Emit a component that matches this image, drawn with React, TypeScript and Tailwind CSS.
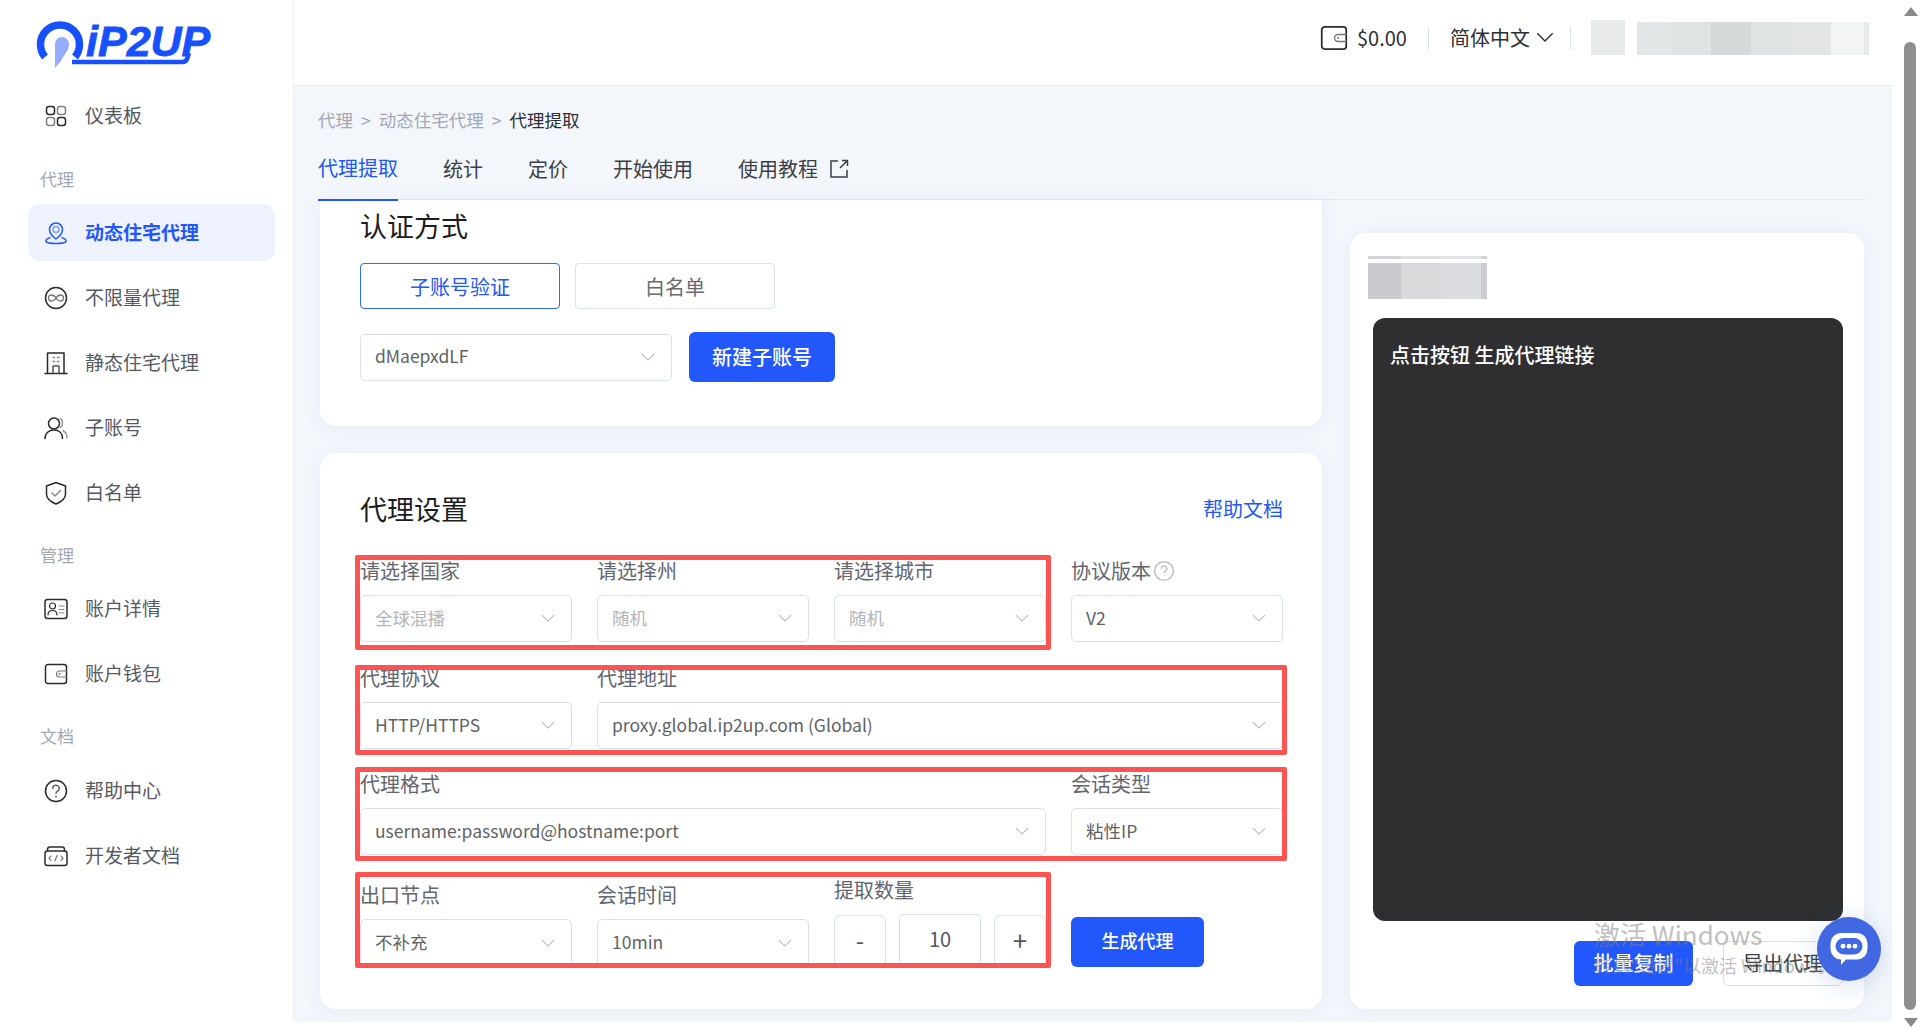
import type { ReactNode } from 'react'

const ink = { fill: 'none', stroke: '#2b2b2b', strokeWidth: 1.5, strokeLinecap: 'round', strokeLinejoin: 'round' } as const

function Logo() {
  return (
    <svg width="186" height="56" viewBox="0 0 186 56" className="block">
      <path d="M9 41 A19.5 19.5 0 1 1 39 41" fill="none" stroke="#1650ff" strokeWidth="7.5" />
      <path d="M36 46 H146 Q150 46 151 43 L153 37" fill="none" stroke="#1650ff" strokeWidth="4.5" />
      <path d="M19 52 V28 A7 7 0 0 1 33 28 C33 36 27 39 25 45 Z" fill="#94adff" />
      <text x="50" y="40" fontFamily="'Liberation Sans', sans-serif" fontSize="43" fontWeight="700" fontStyle="italic" fill="#1650ff" stroke="#1650ff" strokeWidth="0.8">iP2UP</text>
    </svg>
  )
}

function GridIcon() {
  return (
    <svg width="24" height="24" viewBox="0 0 24 24">
      <rect x="2.5" y="2.5" width="8" height="8" rx="2.5" {...ink} />
      <rect x="13.5" y="2.5" width="8" height="8" rx="2.5" {...ink} stroke="#808080" />
      <rect x="2.5" y="13.5" width="8" height="8" rx="2.5" {...ink} stroke="#808080" />
      <rect x="13.5" y="13.5" width="8" height="8" rx="2.5" {...ink} />
    </svg>
  )
}

function PinIcon() {
  return (
    <svg width="24" height="24" viewBox="0 0 24 24" fill="none" stroke="#2257fb" strokeWidth="1.5">
      <path d="M12 18 C8 15 5.5 12 5.5 8.5 A6.5 6.5 0 0 1 18.5 8.5 C18.5 12 16 15 12 18 Z" />
      <circle cx="12" cy="8.5" r="3" stroke="#7f9dfb" />
      <path d="M6.5 16.5 C3 17.5 1.5 19 2 20.5 C3 22 8 22.5 12 22.5 C16 22.5 21 22 22 20.5 C22.5 19 21 17.5 17.5 16.5" />
    </svg>
  )
}

function InfinityIcon() {
  return (
    <svg width="24" height="24" viewBox="0 0 24 24">
      <circle cx="12" cy="12" r="10.5" {...ink} />
      <path d="M12 12 C10.5 9.5 9 9 7.5 9 C5.5 9 4.5 10.5 4.5 12 C4.5 13.5 5.5 15 7.5 15 C9 15 10.5 14.5 12 12 C13.5 9.5 15 9 16.5 9 C18.5 9 19.5 10.5 19.5 12 C19.5 13.5 18.5 15 16.5 15 C15 15 13.5 14.5 12 12 Z" fill="none" stroke="#777" strokeWidth="1.3" />
    </svg>
  )
}

function BuildingIcon() {
  return (
    <svg width="24" height="24" viewBox="0 0 24 24">
      <path d="M1 22.5 H23" {...ink} />
      <path d="M3.5 22.5 V2 H20 V22.5" {...ink} />
      <path d="M9 22.5 V15 H15 V22.5" {...ink} stroke="#555" />
      <path d="M9 6.5 H10.5 M13.5 6.5 H15 M9 10.5 H10.5 M13.5 10.5 H15" {...ink} stroke="#888" />
    </svg>
  )
}

function UsersIcon() {
  return (
    <svg width="24" height="24" viewBox="0 0 24 24">
      <circle cx="10" cy="7.5" r="5.5" {...ink} />
      <path d="M1 22.5 C1 17 5 14 10 14 C15 14 18.5 17 18.5 22.5" {...ink} />
      <path d="M16 2.5 C19 3.5 19.5 9.5 16.5 11.5 M19 14.5 C21.5 16 23 18.5 23 22" {...ink} stroke="#999" />
    </svg>
  )
}

function ShieldIcon() {
  return (
    <svg width="24" height="24" viewBox="0 0 24 24">
      <path d="M12 1.5 L21.5 5 V13 C21.5 18 17 21 12 23 C7 21 2.5 18 2.5 13 V5 Z" {...ink} />
      <path d="M8 12 L11 15 L16.5 9.5" {...ink} stroke="#888" />
    </svg>
  )
}

function IdCardIcon() {
  return (
    <svg width="24" height="24" viewBox="0 0 24 24">
      <rect x="1" y="2.5" width="22" height="19" rx="2.5" {...ink} />
      <circle cx="8.5" cy="9" r="3" {...ink} strokeWidth={1.2} />
      <path d="M4 18 C4 15 6 13.5 8.5 13.5 C11 13.5 13 15 13 18" {...ink} strokeWidth={1.2} />
      <path d="M15 9 H20 M15 12.5 H20 M15 16 H20" {...ink} stroke="#888" strokeWidth={1.1} />
    </svg>
  )
}

function WalletIcon({ size = 24 }: { size?: number }) {
  return (
    <svg width={size} height={size} viewBox="0 0 24 24">
      <path d="M4 2.5 H20 A2.5 2.5 0 0 1 22.5 5 V19 A2.5 2.5 0 0 1 20 21.5 H4 A2.5 2.5 0 0 1 1.5 19 V5 A2.5 2.5 0 0 1 4 2.5 Z" {...ink} />
      <path d="M22.5 9 H15.5 A3 3 0 0 0 15.5 15 H22.5" {...ink} stroke="#777" strokeWidth={1.2} />
      <circle cx="15.5" cy="12" r="0.9" fill="#777" />
    </svg>
  )
}

function HelpIcon() {
  return (
    <svg width="24" height="24" viewBox="0 0 24 24">
      <circle cx="12" cy="12" r="10.5" {...ink} />
      <path d="M8.8 9.5 A3.2 3.2 0 1 1 13.5 12.2 C12.4 12.9 12 13.3 12 14.5" {...ink} stroke="#666" />
      <circle cx="12" cy="17.5" r="0.9" fill="#666" />
    </svg>
  )
}

function DevIcon() {
  return (
    <svg width="24" height="24" viewBox="0 0 24 24">
      <rect x="1" y="7" width="22" height="14.5" rx="2.5" {...ink} />
      <path d="M3.5 7 V5.5 A2.5 2.5 0 0 1 6 3 H18 A2.5 2.5 0 0 1 20.5 5.5 V7" {...ink} />
      <path d="M7 12 L5 14.2 L7 16.5 M17 12 L19 14.2 L17 16.5 M13.2 11.5 L10.8 17" {...ink} stroke="#666" strokeWidth={1.1} />
    </svg>
  )
}

function Chevron({ className = 'text-[#b4b7bf]', w = 14 }: { className?: string; w?: number }) {
  return (
    <svg width={w} height={w * 0.58} viewBox="0 0 14 8" fill="none" stroke="currentColor" strokeWidth="1.1" className={className}>
      <path d="M1 1 L7 7 L13 1" />
    </svg>
  )
}

function NavItem({ icon, label, active }: { icon: ReactNode; label: string; active?: boolean }) {
  return (
    <div className={`flex items-center h-[57px] mx-[28px] w-[247px] mb-[8px] pl-[16px] gap-[17px] rounded-[12px] text-[19px] ${active ? 'bg-[#edf2fd] text-[#2257fb] font-bold' : 'text-[#55585f]'}`}>
      <span className="w-[24px] h-[24px] shrink-0">{icon}</span>
      <span>{label}</span>
    </div>
  )
}

function SectionLabel({ children, className }: { children: string; className: string }) {
  return <div className={`pl-[40px] text-[17px] leading-[24px] text-[#a2a8b5] ${className}`}>{children}</div>
}

function Select({ value, muted, className = '', h = 'h-[47px]' }: { value: string; muted?: boolean; className?: string; h?: string }) {
  return (
    <div className={`flex items-center justify-between ${h} pl-[14px] pr-[16px] bg-white border border-[#dcdfe9] rounded-[5px] text-[17.5px] ${muted ? 'text-[#b3b5ba]' : 'text-[#606266]'} ${className}`}>
      <span className="mt-[-1px]">{value}</span>
      <Chevron />
    </div>
  )
}

function Label({ children }: { children: ReactNode }) {
  return <div className="flex items-center h-[28px] mb-[10px] text-[20px] text-[#63666f]">{children}</div>
}

function Field({ label, value, muted, className = '', h }: { label: ReactNode; value: string; muted?: boolean; className?: string; h?: string }) {
  return (
    <div className={className}>
      <Label>{label}</Label>
      <Select value={value} muted={muted} h={h} />
    </div>
  )
}

function RedBox({ className }: { className: string }) {
  return <div className={`absolute border-[5px] border-[#fc5353] rounded-[2px] ${className}`} />
}

function Mosaic({ items, className }: { items: { w: string; bg: string }[]; className: string }) {
  return (
    <div className={`flex ${className}`}>
      {items.map((it, i) => (
        <div key={i} className={`h-full ${it.w} ${it.bg}`} />
      ))}
    </div>
  )
}

const blockTiles = [
  { w: 'w-[33px]', bg: 'bg-[#cbcbcf]' },
  { w: 'w-[40px]', bg: 'bg-[#dadadd]' },
  { w: 'w-[40px]', bg: 'bg-[#dcdde0]' },
  { w: 'w-[6px]', bg: 'bg-[#cbcbcf]' },
]

const nameTiles = [
  { w: 'w-[34px]', bg: 'bg-[#e4e7e8]' },
  { w: 'w-[40px]', bg: 'bg-[#dfe3e4]' },
  { w: 'w-[40px]', bg: 'bg-[#d5d9da]' },
  { w: 'w-[40px]', bg: 'bg-[#dfe3e3]' },
  { w: 'w-[40px]', bg: 'bg-[#e3e6e5]' },
  { w: 'w-[33px]', bg: 'bg-[#f2f5f4]' },
  { w: 'w-[5px]', bg: 'bg-[#e8ebec]' },
]

function Sidebar() {
  return (
    <aside className="w-[294px] shrink-0 bg-white border-r border-[#eef0f4]">
      <div className="pl-[36px] pt-[16px] h-[83px]">
        <Logo />
      </div>
      <div className="mt-[4px]">
        <NavItem icon={<GridIcon />} label="仪表板" />
      </div>
      <SectionLabel className="mt-[23px] mb-[13px]">代理</SectionLabel>
      <NavItem icon={<PinIcon />} label="动态住宅代理" active />
      <NavItem icon={<InfinityIcon />} label="不限量代理" />
      <NavItem icon={<BuildingIcon />} label="静态住宅代理" />
      <NavItem icon={<UsersIcon />} label="子账号" />
      <NavItem icon={<ShieldIcon />} label="白名单" />
      <SectionLabel className="mt-[22px] mb-[13px]">管理</SectionLabel>
      <NavItem icon={<IdCardIcon />} label="账户详情" />
      <NavItem icon={<WalletIcon />} label="账户钱包" />
      <SectionLabel className="mt-[22px] mb-[14px]">文档</SectionLabel>
      <NavItem icon={<HelpIcon />} label="帮助中心" />
      <NavItem icon={<DevIcon />} label="开发者文档" />
    </aside>
  )
}

function Header() {
  return (
    <header className="h-[86px] shrink-0 bg-white border-b border-[#e9edf3] flex items-center justify-end pr-[23px] pb-[10px] text-[20px] text-[#2c2f36]">
      <WalletIcon size={28} />
      <span className="ml-[9px] w-[71px]">$0.00</span>
      <div className="w-px h-[24px] bg-[#dfe3e9]" />
      <span className="ml-[21px]">简体中文</span>
      <Chevron className="ml-[6px] mr-[16px] text-[#2c2f36]" w={18} />
      <div className="w-px h-[24px] bg-[#dfe3e9]" />
      <div className="ml-[20px] w-[34px] h-[35px] bg-[#e9ebea]" />
      <Mosaic items={nameTiles} className="ml-[12px] h-[33px] mt-[2px]" />
    </header>
  )
}

function Tabs() {
  const tabs = ['统计', '定价', '开始使用']
  return (
    <div className="ml-[24px] mr-[26px] h-[60px] flex items-center pb-[2px] border-b border-[#e1e7f0] text-[20px] text-[#3c3f46]">
      <div className="relative h-[60px] flex items-center pb-[2px] text-[#2257fb]">
        代理提取
        <div className="absolute left-0 right-0 bottom-[-2px] h-[2px] bg-[#2257fb]" />
      </div>
      {tabs.map((t) => (
        <span key={t} className="ml-[45px]">{t}</span>
      ))}
      <span className="ml-[45px]">使用教程</span>
      <svg width="20" height="20" viewBox="0 0 20 20" fill="none" stroke="#3c3f46" strokeWidth="1.5" className="ml-[11px]">
        <path d="M9 2 H2 V18 H18 V11 M11 9 L18.5 1.5 M13 1.5 H18.5 V7" />
      </svg>
    </div>
  )
}

function AuthCard() {
  return (
    <section className="bg-white rounded-b-[16px] pl-[40px] pr-[39px] pt-[6px] pb-[44px] shadow-[0_2px_20px_rgba(40,70,130,0.05)]">
      <h2 className="h-[40px] flex items-center text-[27px] text-[#1c1d20] font-normal">认证方式</h2>
      <div className="flex gap-[15px] mt-[17px]">
        <button className="w-[200px] h-[46px] pt-[1px] border border-[#2f6bff] rounded-[4px] text-[20px] text-[#2257fb]">子账号验证</button>
        <button className="w-[200px] h-[46px] pt-[1px] border border-[#dde0ea] rounded-[4px] text-[20px] text-[#666a72]">白名单</button>
      </div>
      <div className="flex items-center gap-[17px] mt-[23px]">
        <Select value="dMaepxdLF" className="w-[312px]" />
        <button className="w-[146px] h-[50px] bg-[#2257fb] rounded-[6px] text-white text-[20px] font-medium">新建子账号</button>
      </div>
    </section>
  )
}

function Stepper() {
  return (
    <div>
      <Label>提取数量</Label>
      <div className="flex items-end justify-between">
        <button className="w-[52px] h-[52px] pb-[3px] border border-[#dcdfe9] rounded-[6px] text-[24px] text-[#55585f]">-</button>
        <div className="w-[82px] h-[53px] pb-[4px] border border-[#dcdfe9] rounded-[5px] flex items-center justify-center text-[20px] text-[#55585f]">10</div>
        <button className="w-[52px] h-[52px] pb-[4px] border border-[#dcdfe9] rounded-[6px] text-[26px] text-[#55585f]">+</button>
      </div>
    </div>
  )
}

function SettingsCard() {
  return (
    <section className="relative bg-white rounded-[16px] mt-[27px] h-[556px] pl-[40px] pr-[39px] pt-[36px] shadow-[0_2px_20px_rgba(40,70,130,0.05)]">
      <div className="flex items-center justify-between h-[40px]">
        <h2 className="text-[27px] text-[#1c1d20] font-normal">代理设置</h2>
        <span className="text-[20px] text-[#2257fb]">帮助文档</span>
      </div>
      <div className="grid grid-cols-[212px_212px_212px_212px] gap-x-[25px] mt-[28px]">
        <Field label="请选择国家" value="全球混播" muted />
        <Field label="请选择州" value="随机" muted />
        <Field label="请选择城市" value="随机" muted />
        <Field
          label={
            <>
              协议版本
              <svg width="22" height="22" viewBox="0 0 20 20" fill="none" stroke="#c0c2c6" strokeWidth="1.4" className="ml-[2px]">
                <circle cx="10" cy="10" r="8.5" />
                <path d="M7.5 8 A2.5 2.5 0 1 1 11 10.3 C10.3 10.8 10 11 10 12" />
                <path d="M10 14 V14.6" />
              </svg>
            </>
          }
          value="V2"
        />
      </div>
      <div className="grid grid-cols-[212px_212px_212px_212px] gap-x-[25px] mt-[22px]">
        <Field label="代理协议" value="HTTP/HTTPS" />
        <Field label="代理地址" value="proxy.global.ip2up.com (Global)" className="col-span-3" />
      </div>
      <div className="grid grid-cols-[212px_212px_212px_212px] gap-x-[25px] mt-[21px]">
        <Field label="代理格式" value="username:password@hostname:port" className="col-span-3" />
        <Field label="会话类型" value="粘性IP" />
      </div>
      <div className="grid grid-cols-[212px_212px_212px_212px] gap-x-[25px] mt-[21px] items-end">
        <Field label="出口节点" value="不补充" h="h-[48px]" />
        <Field label="会话时间" value="10min" h="h-[48px]" />
        <Stepper />
        <button className="w-[133px] h-[50px] pb-[4px] bg-[#2257fb] rounded-[6px] text-white text-[18px] font-medium">生成代理</button>
      </div>
      <RedBox className="left-[35px] top-[102px] w-[696px] h-[95px]" />
      <RedBox className="left-[35px] top-[212px] w-[932px] h-[90px]" />
      <RedBox className="left-[35px] top-[314px] w-[932px] h-[94px]" />
      <RedBox className="left-[35px] top-[419px] w-[696px] h-[96px]" />
    </section>
  )
}

function ResultCard() {
  return (
    <section className="w-[514px] h-[776px] mt-[33px] bg-white rounded-[16px] pt-[23px] shadow-[0_2px_20px_rgba(40,70,130,0.05)]">
      <div className="pl-[18px]">
        <Mosaic items={blockTiles} className="h-[3px] w-[119px] opacity-80" />
        <Mosaic items={blockTiles} className="h-[36px] w-[119px] mt-[4px]" />
      </div>
      <div className="ml-[23px] mr-[21px] mt-[19px] h-[603px] bg-[#2f2f31] rounded-[12px] pl-[17px] pt-[23px] text-[20px] leading-[28px] font-medium text-white">
        点击按钮 生成代理链接
      </div>
      <div className="flex justify-end gap-[30px] mr-[21px] mt-[20px]">
        <button className="w-[119px] h-[45px] pb-[2px] bg-[#2257fb] rounded-[6px] text-white text-[20px] font-medium">批量复制</button>
        <button className="w-[120px] h-[45px] pb-[2px] border border-[#dcdfe9] rounded-[6px] text-[20px] text-[#3c3f46]">导出代理</button>
      </div>
    </section>
  )
}

function Scrollbar() {
  return (
    <div className="w-[28px] shrink-0 h-[1030px] pl-[12px] pt-[7px] flex flex-col">
      <svg width="14" height="9" viewBox="0 0 14 9" fill="#8a8a8a" className="shrink-0">
        <path d="M7 0 L14 9 H0 Z" />
      </svg>
      <div className="w-[12px] h-[968px] mt-[26px] rounded-full bg-[#8f8f8f]" />
      <svg width="14" height="9" viewBox="0 0 14 9" fill="#8a8a8a" className="shrink-0 mt-[8px]">
        <path d="M0 0 H14 L7 9 Z" />
      </svg>
    </div>
  )
}

function ChatBubble() {
  return (
    <div className="absolute left-[1817px] top-[917px] w-[64px] h-[64px] rounded-full bg-[#4167e2] flex items-center justify-center shadow-[0_4px_24px_rgba(40,70,160,0.18)]">
      <svg width="38" height="34" viewBox="0 0 38 34">
        <path d="M11 1 H27 A10.5 10.5 0 0 1 37.5 11.5 V17 A10.5 10.5 0 0 1 27 27.5 H16 L11 33 V27.5 A10.5 10.5 0 0 1 0.5 17 V11.5 A10.5 10.5 0 0 1 11 1 Z" fill="white" />
        <rect x="5.5" y="6" width="27" height="16.5" rx="8.2" fill="#4167e2" />
        <circle cx="13" cy="14.2" r="2.4" fill="white" />
        <circle cx="19" cy="14.2" r="2.4" fill="white" />
        <circle cx="25" cy="14.2" r="2.4" fill="white" />
      </svg>
    </div>
  )
}

export default function App() {
  return (
    <div className="relative flex h-[1030px] overflow-hidden bg-white font-['Noto_Sans_CJK_SC','Noto_Sans',sans-serif]">
      <div className="flex w-[1892px] h-[1022px] shrink-0">
        <Sidebar />
        <main className="flex-1 flex flex-col min-w-0 bg-[#f3f6fb] overflow-hidden">
          <Header />
          <div className="shrink-0 h-[54px] ml-[24px] flex items-end pb-[7px] text-[17.5px] text-[#a2a8b5]">
            <span>代理</span>
            <span className="mx-[8px]">&gt;</span>
            <span>动态住宅代理</span>
            <span className="mx-[8px]">&gt;</span>
            <span className="text-[#2c2f36]">代理提取</span>
          </div>
          <Tabs />
          <div className="flex gap-[28px] ml-[26px]">
            <div className="w-[1002px] shrink-0">
              <AuthCard />
              <SettingsCard />
            </div>
            <ResultCard />
          </div>
        </main>
      </div>
      <Scrollbar />
      <div className="absolute left-[1594px] top-[916px] text-[#80808080] pointer-events-none">
        <div className="text-[26px] leading-[36px]">激活 Windows</div>
        <div className="text-[18px] leading-[26px]">转到"设置"以激活 Windows。</div>
      </div>
      <ChatBubble />
    </div>
  )
}
